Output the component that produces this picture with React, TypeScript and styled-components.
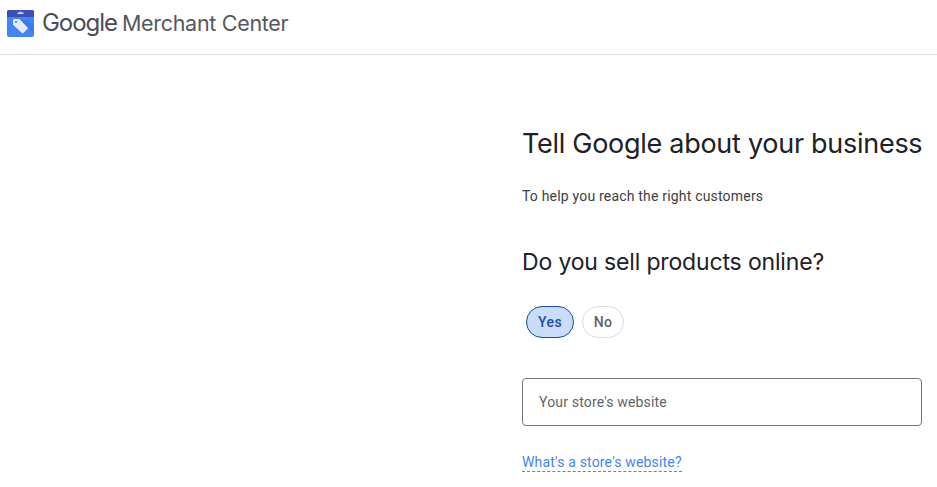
import React from "react";
import styled, { createGlobalStyle } from "styled-components";

const Global = createGlobalStyle`
  html, body { margin: 0; padding: 0; background: #fff; overflow: hidden; }
  body { font-family: Roboto, "Liberation Sans", sans-serif; }
`;
const Page = styled.div`
  width: 937px;
  height: 487px;
  overflow: hidden;
  display: flex;
  flex-direction: column;
`;
const Header = styled.header`
  height: 47px;
  border-bottom: 1px solid #dcdcdc;
  display: flex;
  align-items: flex-start;
  padding: 7px 0 0 6px;
`;
const Brand = styled.div`
  display: flex;
  align-items: center;
  gap: 8px;
`;
const Wordmark = styled.div`
  display: flex;
  align-items: baseline;
  gap: 5px;
  line-height: 32px;
  height: 32px;
  font-family: Inter, "Open Sans", sans-serif;
`;
const Google = styled.span`
  font-size: 24px;
  letter-spacing: -1.05px;
  font-weight: 400;
  color: #4a4d51;
`;
const Product = styled.span`
  font-size: 21.5px;
  letter-spacing: -0.3px;
  color: #55585c;
`;
const Main = styled.main`
  flex: 1;
  padding: 0 0 0 522px;
  display: flex;
  flex-direction: column;
  align-items: flex-start;
`;
const Title = styled.h1`
  margin: 71px 0 0;
  font-family: Inter, "Open Sans", sans-serif;
  font-weight: 400;
  font-size: 27px;
  line-height: 36px;
  letter-spacing: -0.28px;
  color: #202124;
  white-space: nowrap;
`;
const Sub = styled.p`
  margin: 24px 0 0;
  font-size: 14px;
  line-height: 20px;
  letter-spacing: 0.19px;
  color: #3c4043;
`;
const Question = styled.h2`
  margin: 40px 0 0;
  font-family: Inter, "Open Sans", sans-serif;
  font-weight: 400;
  font-size: 23px;
  line-height: 32px;
  letter-spacing: -0.16px;
  color: #202124;
`;
const Choices = styled.div`
  display: flex;
  gap: 8px;
  margin: 28px 0 0 4px;
`;
const Choice = styled.button<{ $on?: boolean }>`
  height: 32px;
  padding: 0;
  width: ${(p) => (p.$on ? "48px" : "42px")};
  border-radius: 16px;
  border: 1px solid ${(p) => (p.$on ? "#174ea6" : "#dadce0")};
  background: ${(p) => (p.$on ? "#c9dcf8" : "#fff")};
  color: ${(p) => (p.$on ? "#1f4fa3" : "#5f6368")};
  font-family: Roboto, sans-serif;
  font-size: 14px;
  font-weight: 500;
  letter-spacing: 0.4px;
`;
const Field = styled.div`
  margin-top: 40px;
  width: 400px;
  height: 48px;
  box-sizing: border-box;
  border: 1px solid #73767a;
  border-radius: 4px;
  display: flex;
  align-items: center;
  padding: 0 16px;
  font-size: 14px;
  letter-spacing: 0.17px;
  color: #5f6368;
`;
const Help = styled.a`
  margin-top: 27px;
  font-size: 14px;
  line-height: 18px;
  letter-spacing: 0.18px;
  color: #4285f4;
  border-bottom: 1px dashed #4285f4;
`;

const Logo = () => (
  <svg width="28" height="28" viewBox="0 0 28 28" aria-hidden="true">
    <rect x="1" y="1" width="27" height="27" rx="2" fill="#4285f4" />
    <path d="M1 3a2 2 0 0 1 2-2h23a2 2 0 0 1 2 2v5H1z" fill="#3c4fb8" />
    <rect x="11.5" y="3.6" width="6" height="1.4" fill="#dfe6fb" />
    <rect x="13.5" y="2.6" width="2" height="1.2" fill="#dfe6fb" />
    <path d="M14 11l8 8 6 6V17l-7-6z" fill="#3a73de" opacity=".6" />
    <path d="M7 11a1 1 0 0 1 1-1h5.4l8.2 8.4a1 1 0 0 1 0 1.4l-4.3 4.2a1 1 0 0 1-1.4 0L7 15.8z" fill="#e3edfd" />
    <circle cx="10" cy="13" r="1.1" fill="#4285f4" />
  </svg>
);

export default function App() {
  return (
    <Page>
      <Global />
      <Header>
        <Brand>
          <Logo />
          <Wordmark>
            <Google>Google</Google>
            <Product>Merchant Center</Product>
          </Wordmark>
        </Brand>
      </Header>
      <Main>
        <Title>Tell Google about your business</Title>
        <Sub>To help you reach the right customers</Sub>
        <Question>Do you sell products online?</Question>
        <Choices>
          <Choice $on>Yes</Choice>
          <Choice>No</Choice>
        </Choices>
        <Field>Your store's website</Field>
        <Help>What's a store's website?</Help>
      </Main>
    </Page>
  );
}
